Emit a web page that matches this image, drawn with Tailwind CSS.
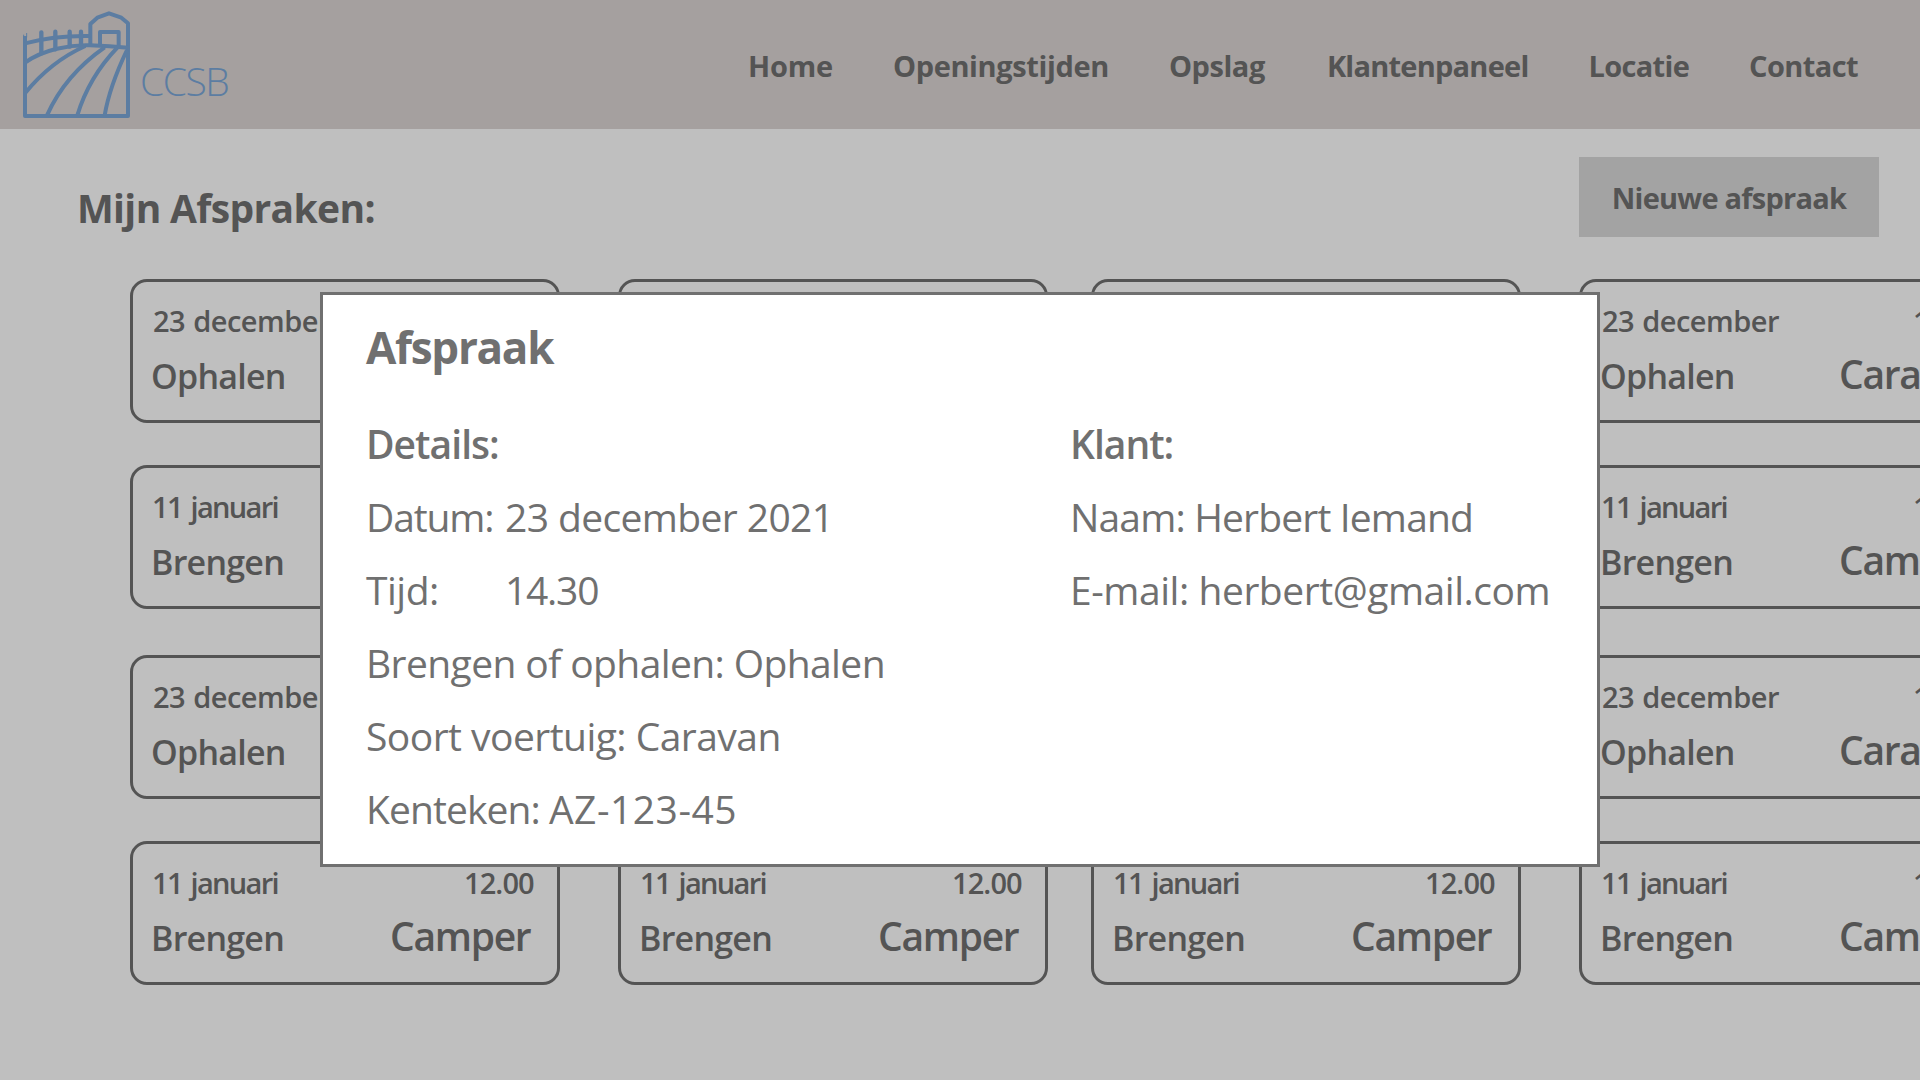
<!DOCTYPE html>
<html lang="nl">
<head>
<meta charset="utf-8">
<title>CCSB - Mijn Afspraken</title>
<script src="https://cdn.jsdelivr.net/npm/@tailwindcss/browser@4"></script>
</head>
<body class="relative h-screen w-screen overflow-hidden bg-[#bfbfbf] font-['Open_Sans',sans-serif] text-[#545454] whitespace-nowrap">
<header class="flex h-[129px] bg-[#a5a09f]">
  <svg class="h-[129px] w-[130px] shrink-0" viewBox="0 0 390 387" fill="none" stroke="#5c7da2" stroke-width="12" stroke-linejoin="round">
    <path d="M75 108V348H384V70L364 53L327 40L292 53L271 72V136"/>
    <path d="M71 110V104M80 99V112" stroke-width="3"/>
    <path d="M75 130Q165 106 271 108"/>
    <path d="M75 188C130 148 210 134 270 136Q330 138 384 143"/>
    <path d="M124 97V160M166 95V148M209 95V140M243 95V138" stroke-width="13" stroke-linecap="round"/>
    <path d="M300 136V96H356V138"/>
    <path d="M75 280C120 224 185 170 256 138M141 346C175 270 235 197 314 142M232 346C255 270 300 197 352 143M314 346C325 280 350 215 381 150"/>
  </svg>
  <span class="ml-[10px] mt-[57px] w-[608px] text-[39px]/[48px] font-light tracking-[-1.5px] text-[#5c7da2]">CCSB</span>
  <nav class="mt-[46px] flex gap-[60px] text-[29px]/[40px] font-bold">
    <a class="tracking-[-0.2px]">Home</a>
    <a class="tracking-[-0.37px]">Openingstijden</a>
    <a class="tracking-[-0.45px]">Opslag</a>
    <a class="ml-[2px] tracking-[-0.76px]">Klantenpaneel</a>
    <a class="tracking-[-0.68px]">Locatie</a>
    <a class="tracking-[-0.6px]">Contact</a>
  </nav>
</header>
<main>
  <div class="flex h-[150px] justify-between pr-[41px] pl-[77px]">
    <h1 class="mt-[55px] text-[39px]/[48px] font-bold tracking-[-0.65px]">Mijn Afspraken:</h1>
    <button class="mt-7 flex h-20 w-[300px] items-center justify-center bg-[#a3a3a3] pt-[2px] text-[29px]/[40px] font-bold tracking-[-0.75px]">Nieuwe afspraak</button>
  </div>
  <div id="cards" class="ml-[130px] grid grid-cols-[488px_473px_488px_430px] grid-rows-[186px_190px_186px_144px]"></div>
</main>
<section class="absolute top-[292px] left-[320px] h-[575px] w-[1280px] border-3 border-[#707070] bg-white pt-[22px] pl-[43px] text-[#707070]">
  <h2 class="text-[44px]/[60px] font-bold tracking-[-1.3px]">Afspraak</h2>
  <div class="mt-[30px] flex text-[39px]/[73px]">
    <div class="w-[704px]">
      <h3 class="font-semibold tracking-[-0.97px]">Details:</h3>
      <p class="flex"><span class="w-[139px] tracking-[-1.15px]">Datum:</span><span class="tracking-[-0.61px]">23 december 2021</span></p>
      <p class="flex"><span class="w-[139px] tracking-[-0.5px]">Tijd:</span><span class="tracking-[-1.25px]">14.30</span></p>
      <p class="tracking-[-0.6px]">Brengen of ophalen: Ophalen</p>
      <p class="tracking-[-0.54px]">Soort voertuig: Caravan</p>
      <p class="flex gap-[9px]"><span class="tracking-[-0.9px]">Kenteken:</span><span class="tracking-[0.5px]">AZ-123-45</span></p>
    </div>
    <div>
      <h3 class="font-semibold tracking-[-1px]">Klant:</h3>
      <p class="tracking-[-0.84px]">Naam: Herbert Iemand</p>
      <p class="tracking-[-0.45px]">E-mail: herbert@gmail.com</p>
    </div>
  </div>
</section>
<script>
const kinds = [
  { date: '23 december', dateCls: 'tracking-[-0.5px] [word-spacing:1px]', time: '14.30', action: 'Ophalen', vehicle: 'Caravan' },
  { date: '11 januari', dateCls: '-ml-px mr-px tracking-[-1.7px] [word-spacing:3px]', time: '12.00', action: 'Brengen', vehicle: 'Camper' },
];
let html = '';
for (let row = 0; row < 4; row++) {
  const k = kinds[row % 2];
  for (let col = 0; col < 4; col++) {
    html += `<article class="h-[144px] w-[430px] rounded-[17px] border-3 border-[#545454] pt-[21px] font-semibold">
      <div class="flex pl-5 text-[29px]/[36px]"><span class="w-[311px] ${k.dateCls}">${k.date}</span><span class="tracking-[-0.9px]">${k.time}</span></div>
      <div class="flex pl-[18px] text-[34px]/[48px]"><span class="mt-[13px] w-[239px] tracking-[-0.75px]">${k.action}</span><span class="mt-[11px] text-[39px]/[48px] tracking-[-1.3px]">${k.vehicle}</span></div>
    </article>`;
  }
}
document.getElementById('cards').innerHTML = html;
</script>
</body>
</html>
